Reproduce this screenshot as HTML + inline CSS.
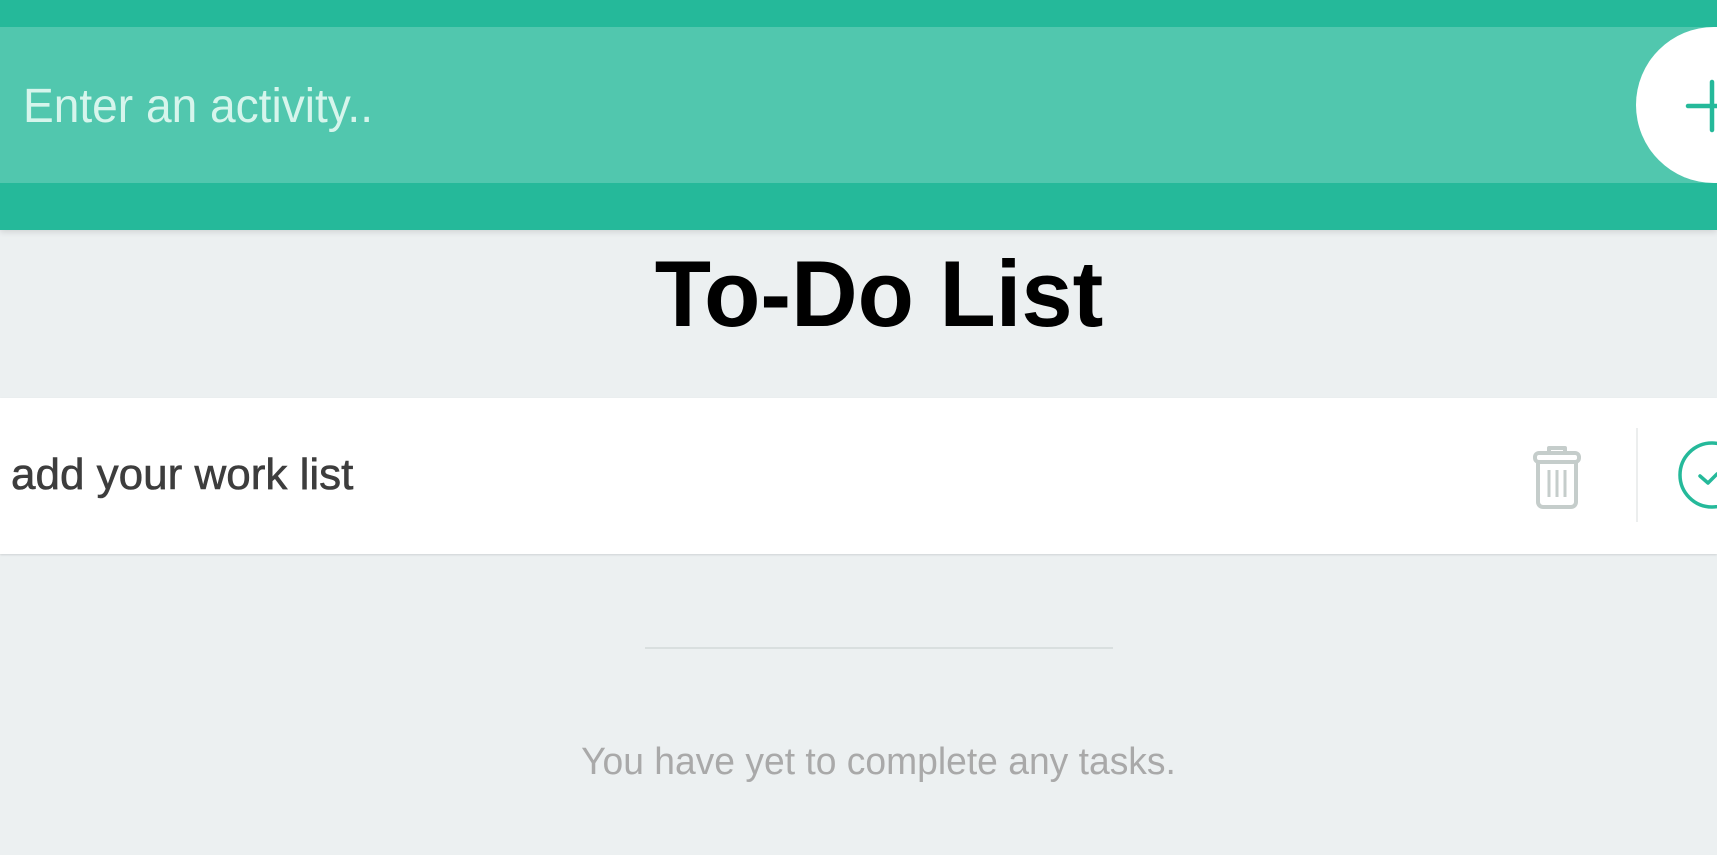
<!DOCTYPE html>
<html><head><meta charset="utf-8"><style>
html,body{margin:0;padding:0;width:1717px;height:855px;overflow:hidden;background:#ecf0f1;font-family:"Liberation Sans",sans-serif;position:relative}
.top{position:absolute;left:0;top:0;width:1717px;height:230px;background:#25b99a;box-shadow:0 2px 6px rgba(0,0,0,0.12)}
.inp{position:absolute;left:0;top:27px;width:1717px;height:156px;background:#51c7ae}
.ph{position:absolute;left:23px;top:79px;font-size:48px;color:#d6f5ec;transform:scaleX(0.96);transform-origin:left}
.btn{position:absolute;left:1636px;top:27px;width:160px;height:156px;border-radius:80px;background:#fff}
.h1{position:absolute;left:0;width:1758px;top:240px;text-align:center;font-size:94px;font-weight:bold;color:#000;transform:scaleX(0.98);transform-origin:879px 0}
.card{position:absolute;left:0;top:398px;width:1717px;height:156px;background:#fff;box-shadow:0 1px 2px rgba(0,0,0,0.12)}
.item{position:absolute;left:11px;top:450px;font-size:44px;color:#3d3d3d;-webkit-text-stroke:0.6px #3d3d3d}
.div{position:absolute;left:1636px;top:428px;width:2px;height:94px;background:#eceeee}
.line{position:absolute;left:645px;top:647px;width:468px;height:2px;background:#d9dfdf}
.empty{position:absolute;left:0;width:1757px;top:741px;text-align:center;font-size:38px;color:#a9a9a9;transform:scaleX(0.98);transform-origin:878px 0}
</style></head><body>
<div class="top"><div class="inp"></div></div>
<div class="ph">Enter an activity..</div>
<div class="btn"></div>
<svg style="position:absolute;left:1680px;top:78px" width="37" height="56"><path d="M8 28H37M32 4V52" stroke="#25b99a" stroke-width="4.5" stroke-linecap="round" fill="none"/></svg>
<div class="h1">To-Do List</div>
<div class="card"></div>
<div class="item">add your work list</div>
<svg style="position:absolute;left:1532px;top:444px" width="50" height="66" viewBox="0 0 50 66"><g fill="none" stroke="#c5cdcb" stroke-width="4" stroke-linejoin="round"><path d="M17 9V4h16v5"/><rect x="3" y="9" width="44" height="9" rx="4"/><path d="M6 18v40a5 5 0 0 0 5 5h28a5 5 0 0 0 5-5V18"/><path d="M17 26v27M25 26v27M33 26v27" stroke-width="3"/></g></svg>
<div class="div"></div>
<svg style="position:absolute;left:1678px;top:440px" width="39" height="70"><circle cx="34" cy="35" r="32" fill="none" stroke="#25b99a" stroke-width="3.5"/><path d="M22 36l8 7 9-9" fill="none" stroke="#25b99a" stroke-width="3.5" stroke-linecap="round" stroke-linejoin="round"/></svg>
<div class="line"></div>
<div class="empty">You have yet to complete any tasks.</div>
</body></html>
